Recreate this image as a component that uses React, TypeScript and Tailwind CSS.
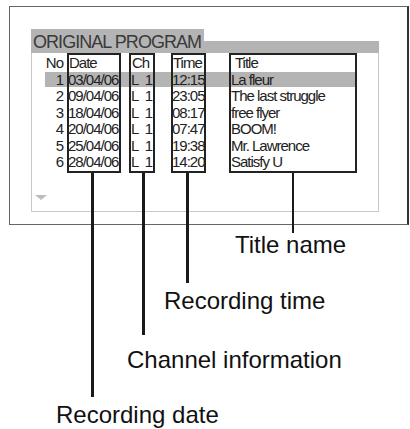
const rows = [
  { no: "1", date: "03/04/06", time: "12:15", title: "La fleur" },
  { no: "2", date: "09/04/06", time: "23:05", title: "The last struggle" },
  { no: "3", date: "18/04/06", time: "08:17", title: "free flyer" },
  { no: "4", date: "20/04/06", time: "07:47", title: "BOOM!" },
  { no: "5", date: "25/04/06", time: "19:38", title: "Mr. Lawrence" },
  { no: "6", date: "28/04/06", time: "14:20", title: "Satisfy U" },
];

// grid rows: 1 = top border, 2..8 = header + 6 rows, 9 = bottom border
const rowStart = ["row-start-2", "row-start-3", "row-start-4", "row-start-5", "row-start-6", "row-start-7", "row-start-8"];

function Cell({ col, row, className = "", children }: { col: string; row: number; className?: string; children: React.ReactNode }) {
  return (
    <div className={`${col} ${rowStart[row]} relative z-10 leading-[16.5px] whitespace-nowrap ${className}`}>
      {children}
    </div>
  );
}

function ProgramScreen() {
  return (
    <div className="ml-[21px] mt-[22px] w-[348px]">
      {/* Title tab + header bar */}
      <div className="flex items-end h-[24px]">
        <div className="w-[173px] h-full bg-[#b4b4b4] pl-[2px] pt-[2px] text-[18px] leading-[22px] tracking-[-0.95px] text-[#3a3a3a]">
          ORIGINAL PROGRAM
        </div>
        <div className="flex-1 h-[12px] bg-[#b4b4b4]" />
      </div>

      {/* Body */}
      <div className="h-[159px] border-x border-b border-[#c8c8c8] pl-[13px]">
        <div className="grid grid-cols-[22px_54px_8px_26px_16px_35px_23px_128px] grid-rows-[2px_repeat(7,16.5px)_2px] text-[15px] tracking-[-1px] text-[#222]">
          {/* selected row highlight */}
          <div className="col-start-1 col-end-9 row-start-3 h-[15px] bg-[#b4b4b4]" />

          {/* column boxes */}
          <div className="col-start-2 row-start-1 row-end-10 border-2 border-[#222] relative z-20" />
          <div className="col-start-4 row-start-1 row-end-10 border-2 border-[#222] relative z-20" />
          <div className="col-start-6 row-start-1 row-end-10 border-2 border-[#222] relative z-20" />
          <div className="col-start-8 row-start-1 row-end-10 border-2 border-[#222] relative z-20" />

          {/* header */}
          <Cell col="col-start-1" row={0} className="text-right pr-[4px]">No</Cell>
          <Cell col="col-start-2" row={0} className="pl-[2px]">Date</Cell>
          <Cell col="col-start-4" row={0} className="pl-[3px]">Ch</Cell>
          <Cell col="col-start-6" row={0} className="pl-[2px]">Time</Cell>
          <Cell col="col-start-8" row={0} className="pl-[6px]">Title</Cell>

          {rows.map((r, i) => (
            <div key={r.no} className="contents">
              <Cell col="col-start-1" row={i + 1} className="text-right pr-[4px]">{r.no}</Cell>
              <Cell col="col-start-2" row={i + 1} className="pl-[1px]">{r.date}</Cell>
              <Cell col="col-start-4" row={i + 1} className="flex justify-between pl-[2px] pr-[3px]">
                <span>L</span>
                <span>1</span>
              </Cell>
              <Cell col="col-start-6" row={i + 1} className="pl-[1px]">{r.time}</Cell>
              <Cell col="col-start-8" row={i + 1} className="pl-[2px]">{r.title}</Cell>
            </div>
          ))}
        </div>

        {/* scroll arrow */}
        <div className="mt-[22px] -ml-[10px] w-0 h-0 border-l-[6px] border-r-[6px] border-t-[5px] border-l-transparent border-r-transparent border-t-[#bdbdbd]" />
      </div>
    </div>
  );
}

export default function App() {
  return (
    <div className="relative w-[410px] h-[429px] bg-white overflow-hidden font-['Liberation_Sans',Arial,sans-serif] text-[#111]">
      {/* screen frame */}
      <div className="ml-[9px] mt-[6px] w-[400px] h-[219px] border border-r-2 border-[#666] border-r-[#333]">
        <ProgramScreen />
      </div>

      {/* callout labels */}
      <div className="text-[24px] leading-[24px]">
        <div className="ml-[235px] mt-[8px]">Title name</div>
        <div className="ml-[164px] mt-[32px]">Recording time</div>
        <div className="ml-[127px] mt-[35px]">Channel information</div>
        <div className="ml-[56px] mt-[31px]">Recording date</div>
      </div>

      {/* callout lines */}
      <svg className="absolute inset-0 pointer-events-none" width="410" height="429" viewBox="0 0 410 429">
        <g stroke="#1a1a1a">
          <line x1="92.5" y1="172" x2="92.5" y2="397" strokeWidth="3" />
          <line x1="143.5" y1="172" x2="143.5" y2="335" strokeWidth="3" />
          <line x1="187.5" y1="172" x2="187.5" y2="283" strokeWidth="3" />
          <line x1="293" y1="172" x2="293" y2="233" strokeWidth="2" />
        </g>
      </svg>
    </div>
  );
}
